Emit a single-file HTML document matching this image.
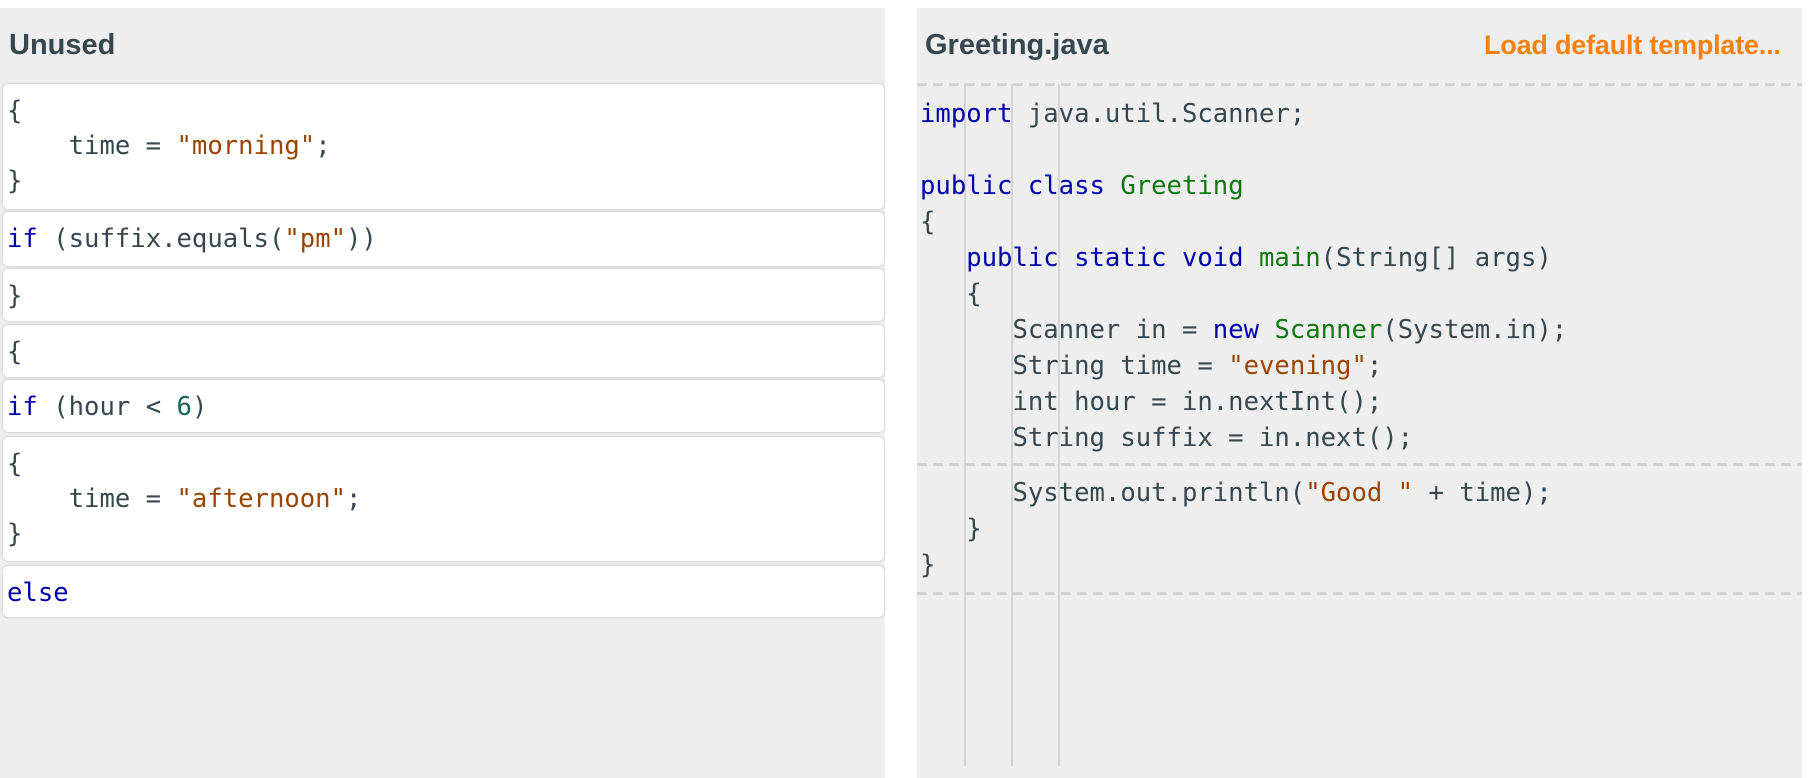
<!DOCTYPE html>
<html><head><meta charset="utf-8"><style>
*{margin:0;padding:0;box-sizing:border-box}
body{width:1811px;height:778px;background:#fff;position:relative;overflow:hidden;font-family:"Liberation Sans",sans-serif}
.panel{position:absolute;top:8px;height:770px;background:#eeeeee}
.title{position:absolute;font-weight:bold;font-size:29px;color:#37474f;top:29px}
.card{position:absolute;left:3px;width:881px;background:#fff;border-radius:5px;box-shadow:0 0 2px rgba(0,0,0,.25)}
.code{font-family:"DejaVu Sans Mono","Liberation Mono",monospace;font-size:25.6px;color:#37474f;white-space:pre;line-height:36px}
.card .code{position:absolute;left:4px;top:10px;line-height:35px}
.k{color:#0000aa}.t{color:#117711}.s{color:#994400}.n{color:#116655}
.dash{position:absolute;left:917px;width:885px;height:3px;background:repeating-linear-gradient(90deg,#d2d2d2 0 10px,transparent 10px 16px)}
.vl{position:absolute;top:84px;height:682px;width:2px;background:#d4d4d4}
</style></head><body>
<div class="panel" style="left:0;width:885px"></div>
<div class="title" style="left:9px">Unused</div>
<div class="card" style="top:84px;height:125px"><div class="code">{
    time = <span class="s">"morning"</span>;
}</div></div>
<div class="card" style="top:212px;height:54px"><div class="code"><span class="k">if</span> (suffix.equals(<span class="s">"pm"</span>))</div></div>
<div class="card" style="top:269px;height:52px"><div class="code">}</div></div>
<div class="card" style="top:325px;height:52px"><div class="code">{</div></div>
<div class="card" style="top:380px;height:52px"><div class="code"><span class="k">if</span> (hour &lt; <span class="n">6</span>)</div></div>
<div class="card" style="top:437px;height:124px"><div class="code">{
    time = <span class="s">"afternoon"</span>;
}</div></div>
<div class="card" style="top:566px;height:51px"><div class="code"><span class="k">else</span></div></div>

<div class="panel" style="left:917px;width:885px"></div>
<div class="title" style="left:925px">Greeting.java</div>
<div class="title" style="left:1484px;color:#f5820f;font-size:27px;top:30px;letter-spacing:-0.2px">Load default template...</div>
<div class="vl" style="left:964px"></div>
<div class="vl" style="left:1011px"></div>
<div class="vl" style="left:1058px"></div>
<div class="dash" style="top:83px"></div>
<div class="dash" style="top:463px"></div>
<div class="dash" style="top:592px"></div>
<div class="code" style="position:absolute;left:920px;top:96px"><span class="k">import</span> java.util.Scanner;

<span class="k">public class</span> <span class="t">Greeting</span>
{
   <span class="k">public static void</span> <span class="t">main</span>(String[] args)
   {
      Scanner in = <span class="k">new</span> <span class="t">Scanner</span>(System.in);
      String time = <span class="s">"evening"</span>;
      int hour = in.nextInt();
      String suffix = in.next();</div>
<div class="code" style="position:absolute;left:920px;top:475px">      System.out.println(<span class="s">"Good "</span> + time);
   }
}</div>
</body></html>
